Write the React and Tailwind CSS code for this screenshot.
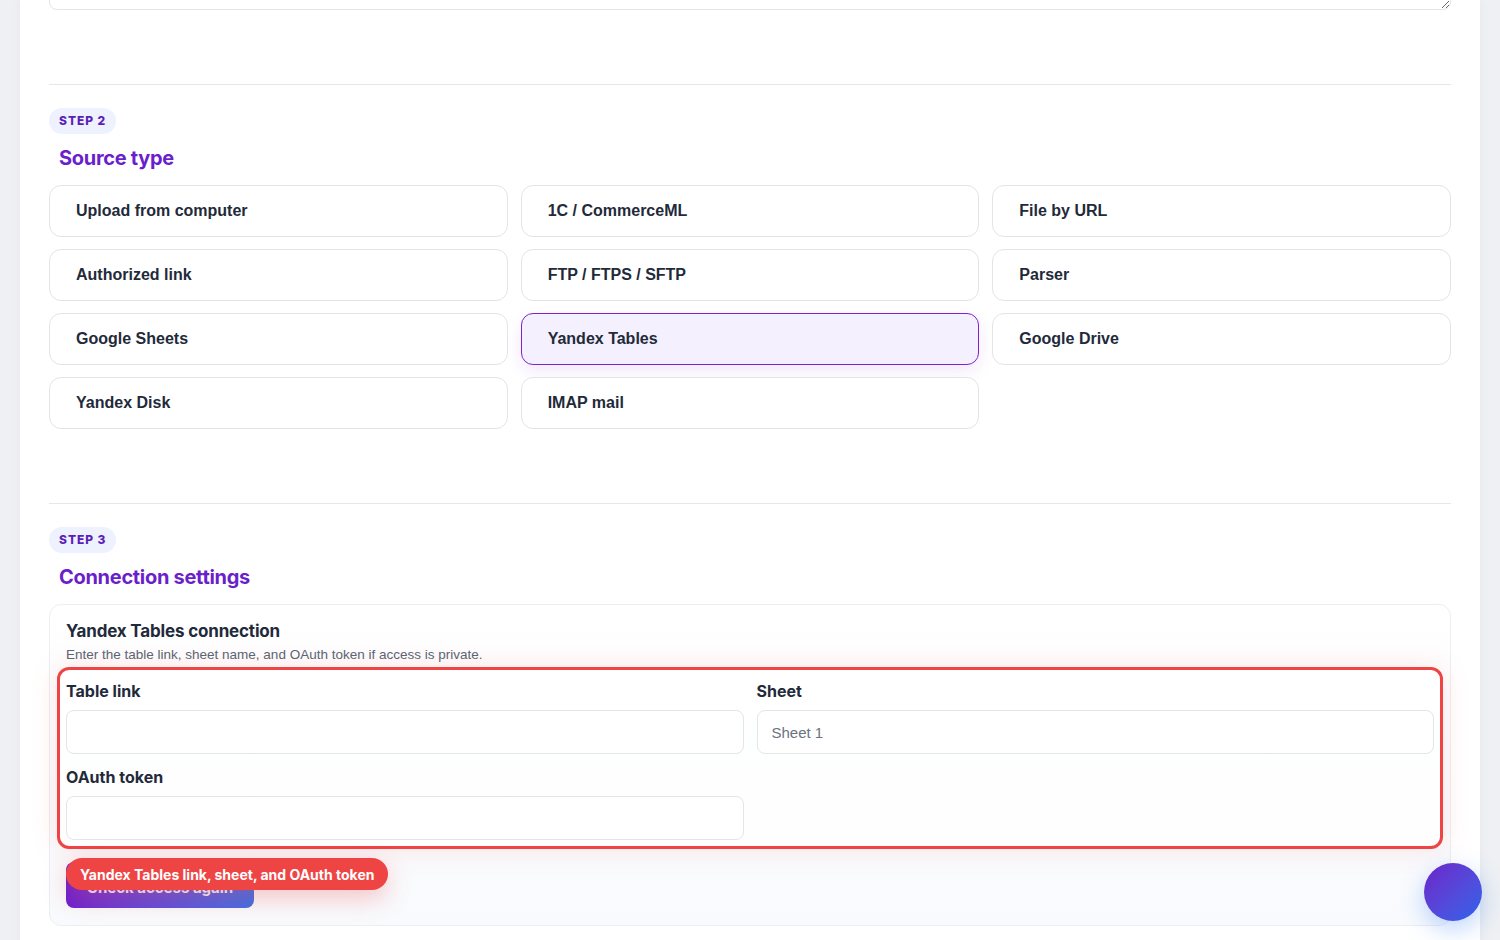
const sources = [
  "Upload from computer",
  "1C / CommerceML",
  "File by URL",
  "Authorized link",
  "FTP / FTPS / SFTP",
  "Parser",
  "Google Sheets",
  "Yandex Tables",
  "Google Drive",
  "Yandex Disk",
  "IMAP mail",
];

const StepBadge = ({ n }) => (
  <span className="inline-flex h-[26px] items-center rounded-full bg-[#eef2ff] px-[10px] font-['Inter',sans-serif] text-[12px] font-extrabold tracking-[0.08em] text-[#5b1fb8]">
    STEP {n}
  </span>
);

const SectionTitle = ({ children }) => (
  <h2 className="ml-[10px] mt-[10px] font-['Inter',sans-serif] text-[20px] leading-[28px] font-bold tracking-[-0.015em] text-[#6b1fcc]">
    {children}
  </h2>
);

const Field = ({ label, placeholder }) => (
  <label className="flex flex-col">
    <span className="font-['Inter',sans-serif] text-[16px] leading-[22px] font-bold text-[#1f2a3a]">
      {label}
    </span>
    <input
      placeholder={placeholder}
      className="mt-[8px] h-[44px] w-full rounded-lg border border-[#e2e5ea] bg-white px-[14px] font-['Liberation_Sans',Arial,sans-serif] text-[15px] text-[#1f2937] outline-none placeholder:text-[#6b7280]"
    />
  </label>
);

export default function App() {
  const selected = "Yandex Tables";

  return (
    <div className="h-[940px] overflow-hidden bg-[#eef0f3]">
      <div className="ml-[20px] w-[1460px] overflow-hidden bg-white px-[29px] pb-[40px] shadow-[0_0_12px_rgba(15,23,42,0.04)]">
        {/* textarea scrolled mostly out of view */}
        <textarea className="-mt-[90px] block h-[100px] w-full resize-y rounded-lg border border-[#e2e5ea] bg-white" />

        <hr className="mt-[74px] border-[#e5e7eb]" />

        <div className="mt-[22px]">
          <StepBadge n={2} />
          <SectionTitle>Source type</SectionTitle>
        </div>

        <div className="mt-[13px] grid grid-cols-3 gap-x-[13px] gap-y-[12px]">
          {sources.map((s) => {
            const active = s === selected;
            return (
              <button
                key={s}
                className={
                  active
                    ? "flex h-[52px] items-center rounded-xl border border-[#7e22ce] bg-[#f5f0fd] px-[26px] text-left font-['Liberation_Sans',Arial,sans-serif] text-[16px] font-bold text-[#1f2a3a] shadow-[0_6px_16px_rgba(126,34,206,0.1)]"
                    : "flex h-[52px] items-center rounded-xl border border-[#e2e4e9] bg-white px-[26px] text-left font-['Liberation_Sans',Arial,sans-serif] text-[16px] font-bold text-[#1f2a3a]"
                }
              >
                {s}
              </button>
            );
          })}
        </div>

        <hr className="mt-[74px] border-[#e5e7eb]" />

        <div className="mt-[22px]">
          <StepBadge n={3} />
          <SectionTitle>Connection settings</SectionTitle>
        </div>

        <div className="mt-[13px] rounded-xl border border-[#eceef2] bg-gradient-to-b from-white to-[#f8fafd] px-[16px] pb-[17px] pt-[14px]">
          <h3 className="font-['Inter',sans-serif] text-[17px] leading-[24px] font-bold tracking-[-0.01em] text-[#1f2a3a]">
            Yandex Tables connection
          </h3>
          <p className="mt-[3px] font-['Liberation_Sans',Arial,sans-serif] text-[13.5px] leading-[18px] text-[#5b6472]">
            Enter the table link, sheet name, and OAuth token if access is private.
          </p>

          <div className="-mx-[9px] mt-[3px] rounded-xl border-[3px] border-[#ef4444] bg-white/80 px-[6px] pb-[6px] pt-[10px] shadow-[0_0_28px_rgba(239,68,68,0.14)]">
            <div className="grid grid-cols-2 gap-x-[13px]">
              <Field label="Table link" />
              <Field label="Sheet" placeholder="Sheet 1" />
            </div>
            <div className="mt-[12px] grid grid-cols-2 gap-x-[13px]">
              <Field label="OAuth token" />
            </div>
          </div>

          <div className="relative mt-[13px]">
            <button className="h-[46px] w-[188px] rounded-lg bg-gradient-to-r from-[#6d1ed0] to-[#3b6fe8] pt-[7px] font-['Inter',sans-serif] text-[15px] font-bold text-white/90">
              Check access again
            </button>
            <div className="absolute -top-[4px] left-0 flex h-[32px] items-center rounded-full bg-[#ef4444] px-[14px] font-['Inter',sans-serif] text-[14px] font-bold whitespace-nowrap text-white shadow-[0_8px_24px_rgba(239,68,68,0.3)]">
              Yandex Tables link, sheet, and OAuth token
            </div>
          </div>
        </div>
      </div>

      <button
        aria-label="Assistant"
        className="fixed right-[18px] bottom-[19px] h-[58px] w-[58px] rounded-full bg-gradient-to-br from-[#6b21c8] to-[#2563eb] shadow-[0_8px_24px_rgba(59,130,246,0.35)]"
      />
    </div>
  );
}
